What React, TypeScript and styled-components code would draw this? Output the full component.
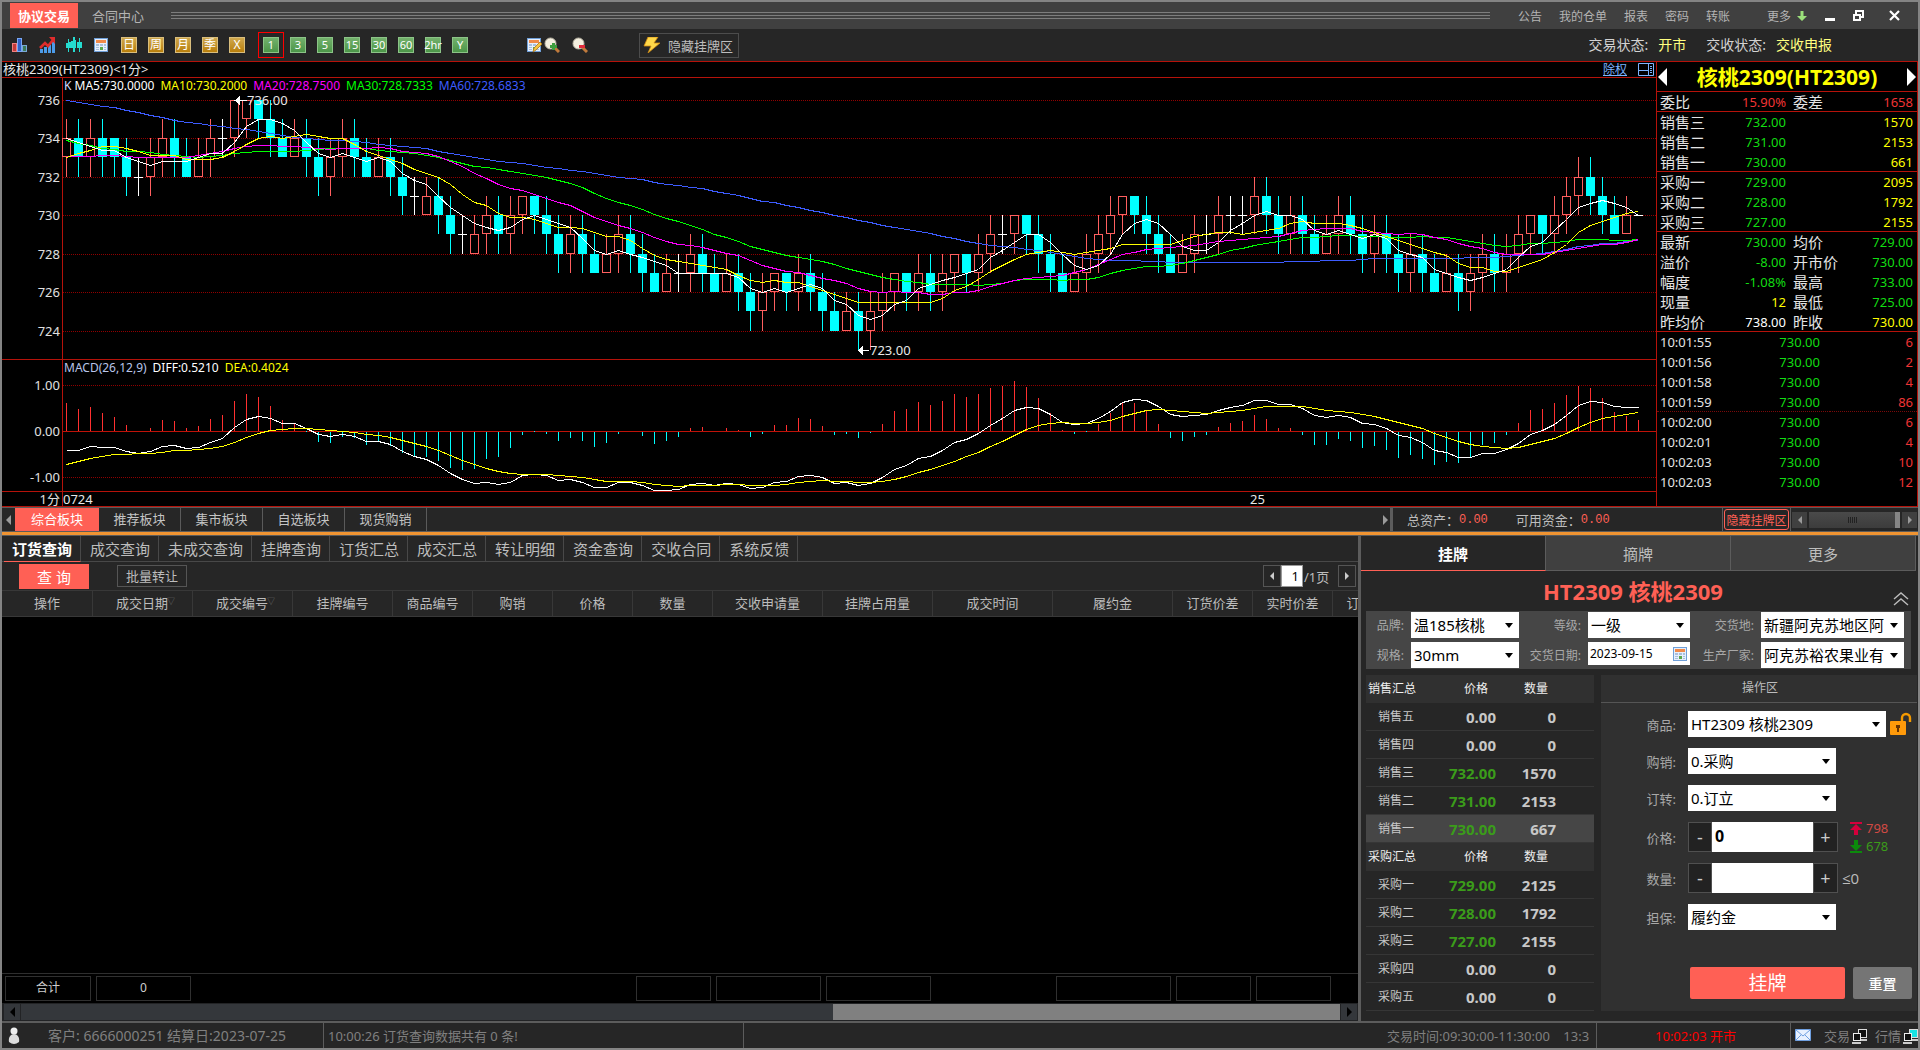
import React from 'react';
import styled, { createGlobalStyle, css } from 'styled-components';

const FONT = '"Noto Sans", "Noto Sans CJK SC", sans-serif';
const RED = '#b5120a';
const CORAL = '#ff6055';
const PANEL = '#262626';

const Global = createGlobalStyle`
  *, *::before, *::after { box-sizing: border-box; }
  body { margin: 0; background: #000; font-family: ${FONT}; font-size: 13px; color: #bdbdbd; }
  button, input, select { font-family: inherit; margin: 0; padding: 0; border: 0; border-radius: 0; outline: 0; }
  button { cursor: pointer; background: none; color: inherit; white-space: nowrap; }
  svg { display: block; flex: none; }
`;

/* ---------- market data ---------- */

type Kind = 'u' | 'd' | 'n';
interface Candle { kind: Kind; high: number; top: number; bottom: number; low: number }

// kind, high, body top, body bottom, low — prices are offsets from 720
const RAW = `u 15 14 13 12|d 15 14 13 12|u 15 14 13 12|d 15 14 13 12|d 14 14 13 12|d 14 13 12 11|n 13 12 12 11|u 14 13 12 11|u 15 14 13 12|d 15 14 13 12
d 14 13 12 12|u 14 13 12 12|u 15 14 13 12|n 15 14 14 13|u 16 16 14 13|u 16 16 15 14|d 16 16 15 14|d 16 15 14 13|d 15 14 13 13|u 15 14 13 13
d 15 14 13 12|d 14 13 12 11|u 14 13 12 11|u 15 14 13 12|d 15 14 13 12|d 14 13 12 12|u 14 13 12 12|d 14 13 12 11|d 13 12 11 10|n 12 11 11 10
u 12 11 10 10|d 12 11 10 9|d 11 10 9 8|n 10 9 9 8|u 10 9 8 8|u 11 10 9 8|d 11 10 9 8|u 11 10 9 8|u 11 11 10 9|d 11 11 10 9
d 11 10 9 8|d 10 9 8 7|u 10 9 8 7|d 10 9 8 7|d 9 8 7 7|u 9 8 7 7|u 10 9 8 7|d 10 9 8 7|d 9 8 7 6|d 8 7 6 6
u 8 7 6 6|n 8 7 7 6|u 9 8 7 6|d 9 8 7 6|d 8 7 6 6|u 8 7 6 6|d 8 7 6 5|d 7 6 5 4|u 7 6 5 4|u 7 7 6 5
d 7 7 6 5|u 8 7 6 5|d 8 7 6 5|d 7 6 5 4|d 6 5 4 4|u 6 5 4 4|d 6 5 4 3|u 6 5 4 3|u 7 6 5 4|u 7 7 6 5
d 7 7 6 5|u 8 7 6 5|d 8 7 6 5|u 8 7 6 5|u 8 8 7 6|d 8 8 7 6|u 9 8 7 6|u 10 9 8 7|n 10 9 9 8|u 10 10 9 8
d 10 10 9 8|d 10 9 8 7|d 9 8 7 6|d 8 7 6 6|u 8 7 6 6|u 9 8 7 6|u 10 9 8 7|u 11 10 9 8|u 11 11 10 9|d 11 11 10 9
d 11 10 9 8|d 10 9 8 7|d 9 8 7 7|u 9 8 7 7|u 10 9 8 7|n 10 9 9 8|u 11 10 9 8|n 11 10 10 9|n 11 10 10 9|u 12 11 10 9
d 12 11 10 9|d 11 10 9 8|u 11 10 9 8|d 11 10 9 8|d 10 9 8 8|u 10 9 8 8|u 11 10 9 8|d 11 10 9 8|d 10 9 8 7|u 10 9 8 7
d 10 9 8 7|d 9 8 7 6|u 9 8 7 6|d 9 8 7 6|d 8 7 6 6|u 8 7 6 6|d 8 7 6 5|u 8 7 6 5|u 9 8 7 6|d 9 8 7 6
u 9 8 7 6|u 10 9 8 7|u 10 10 9 8|d 10 10 9 8|u 11 10 9 8|u 12 11 10 9|u 13 12 11 10|d 13 12 11 10|d 12 11 10 9|d 11 10 9 9
u 11 10 9 9|n 10 10 10 10`;

const CANDLES: Candle[] = RAW.split(/[|\n]/).map((row) => {
  const [kind, ...v] = row.trim().split(' ');
  const [high, top, bottom, low] = v.map((n) => 720 + Number(n));
  return { kind: kind as Kind, high, top, bottom, low };
});
const CLOSES = CANDLES.map((c) => (c.kind === 'd' ? c.bottom : c.top));

// Averages whose window reaches back before the first bar are given as [index, value] knots.
function movingAverage(period: number, knots: [number, number][]): number[] {
  return CLOSES.map((_, i) => {
    if (i >= period - 1) {
      return CLOSES.slice(i - period + 1, i + 1).reduce((a, b) => a + b, 0) / period;
    }
    const k = knots.findIndex(([at]) => at >= i);
    if (k < 0) return knots[knots.length - 1][1];
    if (k === 0) return knots[0][1];
    const [x0, y0] = knots[k - 1];
    const [x1, y1] = knots[k];
    return y0 + ((y1 - y0) * (i - x0)) / (x1 - x0);
  });
}

const AVERAGES = [
  { color: '#3d5cff', values: movingAverage(60, [[0, 736], [1, 735.85], [3, 735.65], [4, 735.6], [5, 735.45], [7, 735.2], [9, 734.95], [10, 734.85], [12, 734.7], [13, 734.6], [15, 734.45], [17, 734.25], [18, 734.15], [20, 734], [22, 733.9], [24, 733.85], [26, 733.7], [30, 733.5], [32, 733.2], [34, 733], [36, 732.8], [38, 732.7], [40, 732.5], [42, 732.35], [44, 732.2], [46, 732], [48, 731.85], [49, 731.7], [51, 731.55], [53, 731.4], [54, 731.25], [56, 731.05], [58, 730.75]]) },
  { color: '#00ff00', values: movingAverage(30, [[0, 733.9], [1, 733.75], [2, 733.65], [3, 733.5], [4, 733.45], [5, 733.35], [7, 733.25], [9, 733.1], [11, 733], [12, 733.05], [14, 733.2], [16, 733.35], [19, 733.35], [23, 733.5], [25, 733.5], [27, 733.3], [28, 733.25]]) },
  { color: '#ff00ff', values: movingAverage(20, [[0, 733.05], [3, 733.1], [4, 733.1], [6, 733], [10, 733], [12, 733.2], [13, 733.3], [14, 733.5], [16, 733.65], [18, 733.6]]) },
  { color: '#ffff00', values: movingAverage(10, [[0, 733], [1, 733.2], [2, 733.4], [3, 733.6], [4, 733.6], [5, 733.5], [6, 733.3], [7, 733.1], [8, 733.1]]) },
  { color: '#ffffff', values: movingAverage(5, [[0, 734], [3, 733.4]]) },
];

const MACD = (() => {
  let fast = 733.39;
  let slow = 733.81;
  let dea = -0.72;
  return CLOSES.map((close, i) => {
    if (i > 0) {
      fast += (2 / 13) * (close - fast);
      slow += (2 / 27) * (close - slow);
      dea += 0.2 * (fast - slow - dea);
    }
    const diff = fast - slow;
    return { diff, dea, bar: 2 * (diff - dea) };
  });
})();

const barX = (i: number) => 3 + i * 12;
const priceY = (p: number) => Math.floor(6 + (736 - p) * 19.25);
const macdY = (v: number) => Math.round(55 - v * 46);
const path = (values: number[], y: (v: number) => number) =>
  values.map((v, i) => `${barX(i) + 0.5},${y(v) + 0.5}`).join(' ');

/* ---------- window frame ---------- */

const Window = styled.div`
  display: flex; flex-direction: column; min-height: 100vh; min-width: 1400px;
  border: 2px solid #848484; background: ${PANEL};
`;
const TitleBar = styled.header`
  display: flex; align-items: center; height: 27px; padding: 0 16px 0 8px; background: #404040; font-size: 12px;
`;
const AppTab = styled.button<{ $on?: boolean }>`
  height: 25px; padding: 0 8px; font-size: 13px; color: #b4b4b4; margin-right: 6px;
  ${(p) => p.$on && css`background: ${CORAL}; color: #fff; font-weight: 700;`}
`;
const Grip = styled.div`
  flex: 1; height: 7px; margin: 0 28px 0 13px;
  background: repeating-linear-gradient(#7d7d7d 0 1px, transparent 1px 3px);
`;
const TitleMenu = styled.nav`display: flex; gap: 17px; margin-right: 37px; color: #b4b4b4;`;
const MenuLink = styled.a`color: #b4b4b4; text-decoration: none;`;
const MoreLink = styled(MenuLink)`display: flex; gap: 6px; align-items: center; margin-right: 17px;`;
const WinButtons = styled.div`display: flex; gap: 14px; button { height: 20px; width: 14px; } button:last-child { margin-left: 8px; }`;

const Toolbar = styled.div`display: flex; align-items: center; height: 32px; padding: 0 86px 0 10px;`;
const ToolGroup = styled.div<{ $gap?: number; $after?: number }>`
  display: flex; align-items: center; gap: ${(p) => p.$gap ?? 11}px; margin-right: ${(p) => p.$after ?? 12}px;
`;
const IconButton = styled.button`width: 16px; height: 16px;`;
const PeriodButton = styled.button<{ $tone: 'gold' | 'green'; $on?: boolean }>`
  width: 16px; height: 16px; color: #fff; font-size: ${(p) => (p.$tone === 'gold' ? 12 : 11)}px; line-height: 14px;
  display: flex; align-items: center; justify-content: center;
  background: ${(p) => (p.$tone === 'gold' ? 'linear-gradient(#cfa84e, #b97f0c)' : 'linear-gradient(#73b16c, #4c9649)')};
  border: 1px solid ${(p) => (p.$tone === 'gold' ? '#d9be7d' : '#8cc487')};
  ${(p) => p.$on && css`outline: 1px solid #f00; outline-offset: 4px;`}
`;
const HideButton = styled.button`
  display: flex; align-items: center; gap: 7px; height: 25px; padding: 0 5px 0 3px; border: 1px solid #4c4c4c; font-size: 13px;
`;
const MarketState = styled.dl`
  display: flex; margin: 0 0 0 auto; font-size: 14px; line-height: 20px;
  dt { color: #d2d2d2; } dd { margin: 0 20px 0 10px; color: #ffff80; } dd:last-child { margin-right: 0; }
`;

/* ---------- chart ---------- */

const Market = styled.section`
  display: grid; grid-template-columns: minmax(0, 1fr) 262px; background: #000;
  border-top: 1px solid ${RED}; border-bottom: 1px solid ${RED};
`;
const Chart = styled.div`display: flex; flex-direction: column; min-width: 0; overflow-x: clip;`;
const ChartHead = styled.div`
  display: flex; align-items: center; height: 16px; border-bottom: 1px solid ${RED}; color: #e8e8e8; font-size: 13px; line-height: 15px;
  span { flex: 1; padding-left: 1px; } svg { margin: 0 2px 0 11px; }
`;
const ExLink = styled.a`color: #7db4ff; font-size: 12px; text-decoration: underline;`;
const Pane = styled.div`display: grid; grid-template-columns: 60px minmax(0, 1fr); border-bottom: 1px solid ${RED};
  &:last-child { border-bottom: 0; }
`;
const Axis = styled.svg`width: 60px; font-size: 13px; fill: #e0e0e0; overflow: visible;`;
const Plot = styled.div`border-left: 1px solid ${RED}; min-width: 0;`;
const Legend = styled.div`
  display: flex; gap: 6px; height: 16px; line-height: 16px; padding-left: 1px; font-size: 12px; white-space: nowrap;
`;
const Tint = styled.span<{ $c: string }>`color: ${(p) => p.$c};`;
const Canvas = styled.svg`width: 100%; font-size: 13px; overflow: visible;`;

/* ---------- quote side panel ---------- */

const Quote = styled.aside`border-left: 1px solid ${RED}; border-right: 1px solid ${RED}; background: #000;`;
const QuoteTitle = styled.div`
  display: flex; align-items: center; justify-content: space-between; height: 30px; padding: 0 1px; border-bottom: 1px solid ${RED};
  h1 { margin: 0; font-size: 21px; line-height: 28px; color: #ff0; font-weight: 700; }
`;
const QuoteTable = styled.table`
  width: 100%; border-collapse: separate; border-spacing: 0; table-layout: fixed; font-size: 13px; line-height: 18px;
  th { font-weight: 400; font-size: 15px; color: #e4e4e4; text-align: left; padding: 0 0 0 3px; white-space: nowrap; }
  td { text-align: right; padding: 0 4px 0 0; }
  th, td { height: 20px; }
`;
const QuoteRow = styled.tr<{ $rule?: 'solid' | 'dotted' }>`
  ${(p) => p.$rule && css`th, td { border-bottom: 1px ${p.$rule} ${p.$rule === 'solid' ? RED : '#7a0a0a'}; }`}
`;
const Num = styled.td<{ $c: string }>`color: ${(p) => p.$c};`;
const TickTime = styled.th`&& { font-size: 13px; }`;
const TickPrice = styled(Num)`&& { padding-right: 10px; }`;

/* ---------- board bar ---------- */

const BoardBar = styled.div`
  display: flex; align-items: stretch; height: 25px; border-top: 1px solid #5c5c5c; border-bottom: 1px solid #5c5c5c;
`;
const ScrollTip = styled.button<{ $end?: boolean }>`
  width: 13px; display: flex; align-items: center; justify-content: center;
  ${(p) => p.$end && css`margin-left: auto; width: 9px;`}
`;
const BoardTab = styled.button<{ $on?: boolean }>`
  width: 82px; font-size: 13px; line-height: 21px; border-right: 1px solid #5a5a5a; color: #c4c4c4;
  ${(p) => p.$on && css`width: 84px; background: ${CORAL}; color: #fff; border-right: 0;`}
`;
const Funds = styled.dl`
  display: flex; align-items: center; margin: 0; width: 333px; border-left: 3px solid #5c5c5c; border-right: 1px solid #5c5c5c; padding-left: 14px;
  dt { color: #bdbdbd; } dd { margin: 0 28px 0 0; color: ${CORAL}; font-family: "Liberation Mono", monospace; font-size: 12px; }
`;
const OutlineButton = styled.button`
  align-self: center; margin: 0 1px; width: 65px; height: 21px; border: 1px solid ${CORAL}; border-radius: 3px; color: ${CORAL}; font-size: 12px;
`;
const MiniScroll = styled.div`
  display: flex; align-items: center; gap: 2px; padding: 0 1px; border-left: 1px solid #5c5c5c;
  button { width: 15px; height: 16px; background: #404040; display: flex; align-items: center; justify-content: center; }
`;
const MiniTrack = styled.div`
  width: 91px; height: 16px; background: linear-gradient(#4a4a4a, #3c3c3c); border-right: 5px solid #858585;
  display: flex; align-items: center; justify-content: center;
`;
const Divider = styled.div`height: 4px; background: #f09432; border-bottom: 1px solid #5c5c5c;`;

/* ---------- orders ---------- */

const Lower = styled.main`display: flex; flex: 1; min-height: 485px;`;
const Orders = styled.section`flex: 1; min-width: 0; display: flex; flex-direction: column; overflow: hidden;`;
const OrderTabs = styled.div`display: flex; height: 26px; border-bottom: 1px solid #484848; padding-left: 2px;`;
const OrderTab = styled.button<{ $on?: boolean }>`
  padding: 0 8px 0 9px; font-size: 15px; line-height: 24px; color: #bdbdbd; border-right: 1px solid #484848;
  ${(p) => p.$on && css`color: #fff; font-weight: 700; padding: 0 8px; border-bottom: 1px solid ${CORAL}; height: 26px;`}
`;
const Actions = styled.div`display: flex; align-items: center; height: 28px; padding: 0 2px 0 17px;`;
const QueryButton = styled.button`width: 70px; height: 25px; background: ${CORAL}; color: #fff; font-size: 15px; margin-right: 28px;`;
const BatchButton = styled.button`width: 70px; height: 22px; border: 1px solid #555; font-size: 13px; line-height: 18px;`;
const Pager = styled.div`display: flex; align-items: center; margin-left: auto; height: 22px;`;
const PageButton = styled.button`
  width: 18px; height: 22px; border: 1px solid #555; display: flex; align-items: center; justify-content: center;
`;
const PageInput = styled.input`
  width: 22px; height: 22px; border: 1px solid #999; background: #fff; color: #000; font-size: 13px; text-align: right; padding-right: 3px;
`;
const PageCount = styled.label`padding: 0 9px 0 1px; width: 35px; white-space: nowrap;`;

const COLS = '91px 100px 100px 100px 80px 80px 80px 80px 110px 110px 120px 120px 80px 80px 80px';
const OrderTable = styled.table`
  flex: 1; display: flex; flex-direction: column; background: #000; overflow: hidden;
  thead, tfoot { display: block; }
  tbody { display: block; flex: 1; }
  tr { display: grid; grid-template-columns: ${COLS}; }
  thead tr { background: ${PANEL}; border-top: 1px solid #383838; border-bottom: 1px solid #383838; height: 27px; }
  th { font-weight: 400; padding: 0; line-height: 25px; text-align: center; border-right: 1px solid #383838; }
  tfoot tr { border-top: 1px solid #2e2e2e; height: 30px; padding: 2px 0; }
`;
const SortMark = styled.span`display: inline-block; margin: 0 -6px 0 -1px; font-size: 8px; color: #6a6a6a; vertical-align: top; line-height: 20px;`;
const TotalCell = styled.td<{ $box: boolean }>`
  margin: 0 2px 0 3px; padding: 0; text-align: center; line-height: 22px; font-size: 12px; color: #cfcfcf;
  border: 1px solid ${(p) => (p.$box ? '#303030' : 'transparent')};
`;
const HScroll = styled.div`
  display: flex; align-items: center; gap: 1px; height: 18px; padding: 0 1px 0 2px; background: #222325;
  button { width: 16px; height: 16px; background: #34373b; display: flex; align-items: center; justify-content: center; }
`;
const HTrack = styled.div`flex: 1; height: 16px; background: #34373b; display: flex; justify-content: flex-end;`;
const HThumb = styled.div`flex: 0 0 calc(100% * 5 / 13); background: #808080;`;

/* ---------- trade panel ---------- */

const Trade = styled.section`
  flex: 0 0 560px; border-left: 3px solid #5c5c5c; display: flex; flex-direction: column; background: ${PANEL};
`;
const TradeTabs = styled.div`display: grid; grid-template-columns: repeat(3, 1fr); height: 35px; margin-right: 2px;`;
const TradeTab = styled.button<{ $on?: boolean }>`
  font-size: 15px; background: ${(p) => (p.$on ? PANEL : '#404040')}; color: ${(p) => (p.$on ? '#fff' : '#bdbdbd')};
  font-weight: ${(p) => (p.$on ? 700 : 400)};
  border-bottom: 1px solid ${(p) => (p.$on ? CORAL : '#5c5c5c')}; border-right: 1px solid #5c5c5c;
`;
const TradeTitle = styled.div`
  display: grid; grid-template-columns: 1fr 20px; align-items: end; height: 40px; padding: 0 5px 5px 12px;
  h2 { margin: 0; color: ${CORAL}; font-size: 22px; line-height: 30px; text-align: center; }
`;
const Filters = styled.div`
  display: grid; grid-template-columns: 38px 108px 55px 102px 57px 143px; column-gap: 7px; row-gap: 4px; align-items: center;
  margin: 0 7px 6px 5px; padding: 1px 6px 1px 0; background: #464646;
`;
const FieldLabel = styled.label<{ $size?: number }>`
  font-size: ${(p) => p.$size ?? 12}px; color: #a8a8a8; text-align: right; white-space: nowrap;
`;
const SelectWrap = styled.div<{ $w?: string }>`
  display: grid; grid-template: 26px / minmax(0, 1fr); width: ${(p) => p.$w ?? 'auto'};
  > * { grid-area: 1 / 1; }
  > svg { justify-self: end; align-self: center; margin-right: 6px; pointer-events: none; }
`;
const Select = styled.select`
  appearance: none; background: #fff; color: #000; font-size: 15px; width: 100%; height: 26px; padding: 0 20px 0 3px; text-overflow: clip;
`;
const DateBox = styled.div`
  display: flex; align-items: center; height: 23px; background: #fff; padding: 0 2px 0 2px; align-self: start;
`;
const DateInput = styled.input`flex: 1; min-width: 0; background: #fff; color: #000; font-size: 12px; height: 23px;`;

const TradeBody = styled.div`display: flex; gap: 7px; flex: 1; padding: 0 1px 10px 5px;`;
const Book = styled.table`
  flex: none; align-self: flex-start; width: 228px; border-collapse: separate; border-spacing: 0; table-layout: fixed; color: #c8c8c8; font-size: 12px;
  th, td { height: 28px; padding: 0; font-weight: 400; text-align: right; line-height: 20px; }
`;
const BookHead = styled.tr`
  background: #303030; color: #f0f0f0;
  th:first-child { text-align: left; padding-left: 2px; }
  th:nth-child(2) { padding-right: 8px; } th:nth-child(3) { padding-right: 8px; }
`;
const BookRow = styled.tr<{ $on?: boolean }>`
  background: ${(p) => (p.$on ? '#464646' : 'transparent')};
  th, td { border-bottom: 1px solid #363636; }
  th { text-align: left; padding-left: 12px; }
`;
const BookNum = styled.td<{ $green?: boolean }>`&& { font-size: 15px; font-weight: 700; } color: ${(p) => (p.$green ? '#3b9c1a' : '#c8c8c8')};`;

const Entry = styled.form`flex: 1; background: #303030; display: flex; flex-direction: column;`;
const EntryHead = styled.div`height: 28px; line-height: 26px; border-bottom: 1px solid #555; text-align: center; font-size: 12px; padding-left: 2px;`;
const EntryRows = styled.div`display: flex; flex-direction: column; gap: 11px; padding: 8px 0 0;`;
const EntryRow = styled.div`display: grid; grid-template-columns: 75px auto; column-gap: 12px; align-items: center; justify-content: start;`;
const Inline = styled.div`display: flex; align-items: center; gap: 4px;`;
const Stepper = styled.div`
  display: grid; grid-template-columns: 24px 101px 25px; height: 30px;
  button { background: #222; border: 1px solid #505050; color: #ccc; font-size: 18px; line-height: 26px; }
  input { background: #fff; color: #000; font-size: 16px; font-weight: 700; padding: 0 0 3px 3px; width: 100%; }
`;
const Limits = styled.div`
  display: flex; flex-direction: column; justify-content: center; height: 30px; padding-left: 8px; line-height: 18px; font-size: 13px;
`;
const Limit = styled.span<{ $c: string }>`display: flex; align-items: center; gap: 4px; color: ${(p) => p.$c};`;
const MaxQty = styled.span`font-size: 15px; line-height: 20px; font-family: "Open Sans", "DejaVu Sans", sans-serif;`;
const EntryButtons = styled.div`display: flex; gap: 8px; padding: 37px 5px 12px 89px;`;
const SubmitButton = styled.button`flex: 1; height: 32px; border-radius: 2px; background: ${CORAL}; color: #fff; font-size: 19px; line-height: 30px;`;
const ResetButton = styled.button`width: 59px; height: 32px; border-radius: 2px; background: #757575; color: #fff; font-size: 14px; font-weight: 500;`;

/* ---------- status bar ---------- */

const StatusBar = styled.footer`
  display: flex; height: 27px; border-top: 2px solid #5c5c5c; color: #808080; font-size: 13px; line-height: 24px;
`;
const StatusCell = styled.div<{ $w?: number; $c?: string; $center?: boolean }>`
  flex: ${(p) => (p.$w ? `0 0 ${p.$w}px` : '1')}; display: flex; align-items: center; border-right: 1px solid #5c5c5c;
  white-space: pre; overflow: hidden; color: ${(p) => p.$c ?? 'inherit'}; padding-left: 4px;
  justify-content: ${(p) => (p.$center ? 'center' : 'flex-start')};
  &:last-child { border-right: 0; }
`;
const Client = styled.span`font-size: 14px; padding-left: 26px;`;
const Hours = styled.span`margin-left: auto; width: 209px;`;
const LinkState = styled.span`display: flex; align-items: center; gap: 2px; margin-left: 7px; &:nth-of-type(1) { margin-left: 13px; }`;

/* ---------- icons ---------- */

const Tri = ({ dir, c = '#9a9a9a', w = 5, h = 10 }: { dir: 'l' | 'r'; c?: string; w?: number; h?: number }) => (
  <svg width={w} height={h}><path fill={c} d={dir === 'l' ? `M${w} 0V${h}L0 ${h / 2}z` : `M0 0V${h}L${w} ${h / 2}z`} /></svg>
);
const Caret = () => <svg width="8" height="5"><path d="M0 0h8L4 5z" fill="#000" /></svg>;

const CalendarIcon = ({ pen }: { pen?: boolean }) => (
  <svg width="16" height="16">
    <rect x="1.5" y="1.5" width="13" height="13" fill="#e6effc" stroke="#6f9fd8" />
    <rect x="3" y="3" width="10" height="3" fill="#f08a4a" />
    <path d="M3 7h3v2H3zM7 7h3v2H7zM11 7h2v2h-2zM3 10h3v1H3zM11 10h2v1h-2zM3 12h3v1H3zM11 12h2v1h-2z" fill="#a9bfdd" />
    <rect x="7" y="10" width="3" height="3" fill="#5aa84c" />
    {pen && <path d="M7 15l1-4 6-6 2 2-6 6z" fill="#f5c542" stroke="#a8741a" strokeWidth="0.8" />}
  </svg>
);
const BarsIcon = () => (
  <svg width="16" height="16">
    <rect x="0.5" y="6.5" width="4" height="8" fill="#c23a3a" stroke="#f08080" />
    <rect x="5.5" y="1.5" width="4" height="13" fill="#2f62c8" stroke="#7aa8f4" />
    <rect x="10.5" y="8.5" width="4" height="6" fill="#3d7b5c" stroke="#7aa8d8" />
  </svg>
);
const TrendIcon = () => (
  <svg width="16" height="16">
    <path d="M1 16v-4h3v4zM5 16v-6h3v6zM9 16V8h3v8zM13 16V5h3v11z" fill="#4c9be8" />
    <path d="M1 11l5-5 3 3 5-6" fill="none" stroke="#e02c2c" strokeWidth="2.600" /><path d="M10 0h6v7z" fill="#e02c2c" />
  </svg>
);
const CandleIcon = () => (
  <svg width="16" height="16" fill="#25dcd0">
    <path d="M2 2h1v3h2v6H3v4H2v-4H0V6h2zM7 0h2v3h1v8H9v4H7v-4H5V4h2zM13 1h1v4h2v6h-2v4h-1v-4h-2V5h2z" />
  </svg>
);
const LensIcon = ({ plus }: { plus?: boolean }) => (
  <svg width="16" height="16">
    <path d="M10 10l5 5" stroke="#c07a3c" strokeWidth="3" /><circle cx="6.5" cy="6.5" r="5.5" fill="#f4efdf" stroke="#b9b4a4" />
    {plus ? <path d="M6 8h7v3H6zM8 6h3v7H8z" fill="#3e9e3e" /> : <path d="M7 8h6v3H7z" fill="#e02c3c" />}
  </svg>
);
const BoltIcon = () => (
  <svg width="18" height="16"><path d="M5 0h10l-4 6h6L5 16l3-7H1z" fill="#ffd84a" stroke="#d08a12" strokeWidth="0.8" /></svg>
);
const LockIcon = () => (
  <svg width="22" height="24">
    <path d="M12 10V6a4 4 0 018 0v4" fill="none" stroke="#f59a00" strokeWidth="2.400" />
    <rect x="0" y="9" width="16" height="14" rx="1" fill="#ff9a0a" /><path d="M6 13h4v3H9v4H7v-4H6z" fill="#6a3400" />
  </svg>
);
const LimitIcon = ({ up }: { up?: boolean }) => (
  <svg width="12" height="13">
    {up ? <path fill="#d4003c" d="M0 0h12v2H0zM6 2l6 6H8v5H4V8H0z" /> : <path fill="#0b8a0b" d="M0 11h12v2H0zM6 11L0 5h4V0h4v5h4z" />}
  </svg>
);
const NetIcon = ({ on }: { on?: boolean }) => (
  <svg width="16" height="16">
    <rect x="6.500" y="1.500" width="8" height="8" fill={on ? '#17e4e4' : '#111'} stroke="#ddd" />
    <path d="M8 11h7v2H8z" fill="#ccc" />
    <rect x="1.500" y="5.500" width="7" height="7" fill="#111" stroke="#eee" /><path d="M0 14h9v2H0z" fill="#ccc" />
  </svg>
);

/* ---------- sections ---------- */

const GREEN = '#12dc12';
const QRED = '#f03434';

const PriceChart = () => (
  <Pane>
    <Axis height={281} textAnchor="end">
      {[736, 734, 732, 730, 728, 726, 724].map((p) => <text key={p} x="58" y={priceY(p) + 21}>{p}</text>)}
    </Axis>
    <Plot>
      <Legend>
        <span><Tint $c="#d0d8ff">K</Tint> <Tint $c="#fff">MA5:730.0000</Tint></span>
        <Tint $c="#ff0">MA10:730.2000</Tint><Tint $c="#f0f">MA20:728.7500</Tint>
        <Tint $c="#0f0">MA30:728.7333</Tint><Tint $c="#3d5cff">MA60:728.6833</Tint>
      </Legend>
      <Canvas height={265}>
        <g shapeRendering="crispEdges">
          {[736, 734, 732, 730, 728, 726, 724].map((p) => (
            <line key={p} x1="0" x2="100%" y1={priceY(p) + 0.5} y2={priceY(p) + 0.5} stroke="#900000" strokeDasharray="1 1" />
          ))}
          {CANDLES.map((c, i) => {
            const x = barX(i);
            const [h, t, b, l] = [c.high, c.top, c.bottom, c.low].map(priceY);
            if (c.kind === 'n') return <path key={i} d={`M${x - 4} ${t + 0.5}h9M${x + 0.5} ${h}V${l}`} stroke="#fff" fill="none" />;
            if (c.kind === 'd') return <path key={i} d={`M${x - 4} ${t}h9V${b}h-9zM${x} ${h}h1V${l}h-1z`} fill="#0ff" />;
            return (
              <path key={i} d={`M${x - 3.5} ${t + 0.5}h8V${b - 0.5}h-8zM${x + 0.5} ${h}V${t}M${x + 0.5} ${b}V${l}`} stroke="#ff5f5f" fill="none" />
            );
          })}
          {AVERAGES.map((a) => <polyline key={a.color} points={path(a.values, priceY)} stroke={a.color} fill="none" />)}
          <path d={`M${barX(14)} 6.500h13M${barX(14) + 2} 6.500l3 -3v6z`} stroke="#fff" fill="#fff" />
          <path d={`M${barX(66)} 256.500h11M${barX(66) + 1} 256.500l3 -3v6z`} stroke="#fff" fill="#fff" />
        </g>
        <text x={barX(14) + 13} y="11" fill="#e8e8e8">736.00</text>
        <text x={barX(66) + 12} y="261" fill="#e8e8e8">723.00</text>
      </Canvas>
    </Plot>
  </Pane>
);

const MacdChart = () => (
  <Pane>
    <Axis height={131} textAnchor="end">
      <text x="58" y="30">1.00</text><text x="58" y="76">0.00</text><text x="58" y="122">-1.00</text>
    </Axis>
    <Plot>
      <Legend><Tint $c="#b8c4e8">MACD(26,12,9)</Tint><Tint $c="#fff">DIFF:0.5210</Tint><Tint $c="#ff0">DEA:0.4024</Tint></Legend>
      <Canvas height={115} shapeRendering="crispEdges">
        {[1, -1].map((v) => (
          <line key={v} x1="0" x2="100%" y1={macdY(v) + 0.5} y2={macdY(v) + 0.5} stroke="#900000" strokeDasharray="1 1" />
        ))}
        <line x1="0" x2="100%" y1="55.500" y2="55.500" stroke="#c01208" />
        {MACD.map((m, i) => (
          <line key={i} x1={barX(i) + 0.5} x2={barX(i) + 0.5} y1={m.bar > 0 ? 55 : 56} y2={macdY(m.bar)} stroke={m.bar > 0 ? '#ff3030' : '#0ff'} />
        ))}
        <polyline points={path(MACD.map((m) => m.diff), macdY)} stroke="#fff" fill="none" />
        <polyline points={path(MACD.map((m) => m.dea), macdY)} stroke="#ff0" fill="none" />
      </Canvas>
    </Plot>
  </Pane>
);

const TimeAxis = () => (
  <Pane>
    <Axis height={14} textAnchor="end"><text x="58" y="12">1分</text></Axis>
    <Plot><Canvas height={14} fill="#e8e8e8"><text x="0" y="12">0724</text><text x={barX(99) - 4} y="12">25</text></Canvas></Plot>
  </Pane>
);

const DEPTH: [string, string, string, boolean][] = [
  ['销售三', '732.00', '1570', false], ['销售二', '731.00', '2153', false], ['销售一', '730.00', '661', true],
  ['采购一', '729.00', '2095', false], ['采购二', '728.00', '1792', false], ['采购三', '727.00', '2155', true],
];
const STATS: [string, string, string, string, string, string][] = [
  ['最新', '730.00', GREEN, '均价', '729.00', GREEN],
  ['溢价', '-8.00', GREEN, '开市价', '730.00', GREEN],
  ['幅度', '-1.08%', GREEN, '最高', '733.00', GREEN],
  ['现量', '12', '#ff0', '最低', '725.00', GREEN],
  ['昨均价', '738.00', '#fff', '昨收', '730.00', '#ff0'],
];
const TICKS: [string, string][] = [
  ['10:01:55', '6'], ['10:01:56', '2'], ['10:01:58', '4'], ['10:01:59', '86'],
  ['10:02:00', '6'], ['10:02:01', '4'], ['10:02:03', '10'], ['10:02:03', '12'],
];

const QuotePanel = () => (
  <Quote>
    <QuoteTitle>
      <Tri dir="l" c="#fff" w={9} h={18} /><h1>核桃2309(HT2309)</h1><Tri dir="r" c="#fff" w={9} h={18} />
    </QuoteTitle>
    <QuoteTable>
      <colgroup><col style={{ width: 62 }} /><col style={{ width: 71 }} /><col style={{ width: 62 }} /><col /></colgroup>
      <tbody>
        <QuoteRow $rule="solid"><th>委比</th><Num $c={QRED}>15.90%</Num><th>委差</th><Num $c={QRED}>1658</Num></QuoteRow>
        {DEPTH.map(([n, p, q, end]) => (
          <QuoteRow key={n} $rule={end ? 'solid' : undefined}><th>{n}</th><Num $c={GREEN}>{p}</Num><td /><Num $c="#ff0">{q}</Num></QuoteRow>
        ))}
        {STATS.map(([a, av, ac, b, bv, bc], i) => (
          <QuoteRow key={a} $rule={i === 4 ? 'solid' : undefined}><th>{a}</th><Num $c={ac}>{av}</Num><th>{b}</th><Num $c={bc}>{bv}</Num></QuoteRow>
        ))}
      </tbody>
    </QuoteTable>
    <QuoteTable>
      <colgroup><col style={{ width: 90 }} /><col style={{ width: 83 }} /><col /></colgroup>
      <tbody>
        {TICKS.map(([t, q], i) => (
          <QuoteRow key={i} $rule={i === 3 ? 'dotted' : undefined}>
            <TickTime>{t}</TickTime><TickPrice $c={GREEN}>730.00</TickPrice><Num $c={QRED}>{q}</Num>
          </QuoteRow>
        ))}
      </tbody>
    </QuoteTable>
  </Quote>
);

const HEADS = ['操作', '成交日期', '成交编号', '挂牌编号', '商品编号', '购销', '价格', '数量', '交收申请量', '挂牌占用量', '成交时间', '履约金', '订货价差', '实时价差', '订货盈亏'];
const TOTALS: (string | null)[] = ['合计', '0', null, null, null, null, null, '', '', '', null, '', '', ''];

const OrdersPanel = () => (
  <Orders>
    <OrderTabs role="tablist">
      {['订货查询', '成交查询', '未成交查询', '挂牌查询', '订货汇总', '成交汇总', '转让明细', '资金查询', '交收合同', '系统反馈'].map((t, i) => (
        <OrderTab key={t} type="button" role="tab" aria-selected={i === 0} $on={i === 0}>{t}</OrderTab>
      ))}
    </OrderTabs>
    <Actions>
      <QueryButton type="button">查 询</QueryButton>
      <BatchButton type="button">批量转让</BatchButton>
      <Pager>
        <PageButton type="button" aria-label="上一页"><Tri dir="l" c="#ccc" w={4} h={8} /></PageButton>
        <PageInput id="page" defaultValue="1" />
        <PageCount htmlFor="page">/1页</PageCount>
        <PageButton type="button" aria-label="下一页"><Tri dir="r" c="#ccc" w={4} h={8} /></PageButton>
      </Pager>
    </Actions>
    <OrderTable>
      <thead><tr>{HEADS.map((h, i) => <th key={h} scope="col">{h}{(i === 1 || i === 2) && <SortMark>▽</SortMark>}</th>)}</tr></thead>
      <tbody />
      <tfoot><tr>{TOTALS.map((t, i) => <TotalCell key={i} $box={t !== null}>{t}</TotalCell>)}</tr></tfoot>
    </OrderTable>
    <HScroll>
      <button type="button" aria-label="向左"><Tri dir="l" c="#000" /></button>
      <HTrack><HThumb /></HTrack>
      <button type="button" aria-label="向右"><Tri dir="r" c="#000" /></button>
    </HScroll>
  </Orders>
);

const Choice = ({ id, value, w }: { id: string; value: string; w?: string }) => (
  <SelectWrap $w={w}><Select id={id} defaultValue={value}><option>{value}</option></Select><Caret /></SelectWrap>
);

const SELLS: [string, string, string][] = [['销售五', '0.00', '0'], ['销售四', '0.00', '0'], ['销售三', '732.00', '1570'], ['销售二', '731.00', '2153'], ['销售一', '730.00', '667']];
const BUYS: [string, string, string][] = [['采购一', '729.00', '2125'], ['采购二', '728.00', '1792'], ['采购三', '727.00', '2155'], ['采购四', '0.00', '0'], ['采购五', '0.00', '0']];

const BookSide = ({ title, rows }: { title: string; rows: [string, string, string][] }) => (
  <tbody>
    <BookHead><th scope="col">{title}</th><th scope="col">价格</th><th scope="col">数量</th><th /></BookHead>
    {rows.map(([n, p, q]) => (
      <BookRow key={n} $on={n === '销售一'}>
        <th scope="row">{n}</th><BookNum $green={p !== '0.00'}>{p}</BookNum><BookNum>{q}</BookNum><td />
      </BookRow>
    ))}
  </tbody>
);

const TradePanel = () => (
  <Trade>
    <TradeTabs role="tablist">
      <TradeTab type="button" role="tab" $on>挂牌</TradeTab><TradeTab type="button" role="tab">摘牌</TradeTab><TradeTab type="button" role="tab">更多</TradeTab>
    </TradeTabs>
    <TradeTitle>
      <h2>HT2309 核桃2309</h2>
      <svg width="16" height="14"><path d="M1 7l7-6 7 6M1 13l7-6 7 6" fill="none" stroke="#bbb" strokeWidth="1.400" /></svg>
    </TradeTitle>
    <Filters>
      <FieldLabel htmlFor="brand">品牌:</FieldLabel><Choice id="brand" value="温185核桃" />
      <FieldLabel htmlFor="grade">等级:</FieldLabel><Choice id="grade" value="一级" />
      <FieldLabel htmlFor="place">交货地:</FieldLabel><Choice id="place" value="新疆阿克苏地区阿" />
      <FieldLabel htmlFor="spec">规格:</FieldLabel><Choice id="spec" value="30mm" />
      <FieldLabel htmlFor="date">交货日期:</FieldLabel>
      <DateBox><DateInput id="date" defaultValue="2023-09-15" /><CalendarIcon /></DateBox>
      <FieldLabel htmlFor="maker">生产厂家:</FieldLabel><Choice id="maker" value="阿克苏裕农果业有" />
    </Filters>
    <TradeBody>
      <Book>
        <colgroup><col style={{ width: 60 }} /><col style={{ width: 70 }} /><col style={{ width: 60 }} /><col /></colgroup>
        <BookSide title="销售汇总" rows={SELLS} />
        <BookSide title="采购汇总" rows={BUYS} />
      </Book>
      <Entry>
        <EntryHead>操作区</EntryHead>
        <EntryRows>
          <EntryRow><FieldLabel $size={13} htmlFor="goods">商品:</FieldLabel><Inline><Choice id="goods" value="HT2309 核桃2309" w="198px" /><LockIcon /></Inline></EntryRow>
          <EntryRow><FieldLabel $size={13} htmlFor="side">购销:</FieldLabel><Choice id="side" value="0.采购" w="148px" /></EntryRow>
          <EntryRow><FieldLabel $size={13} htmlFor="open">订转:</FieldLabel><Choice id="open" value="0.订立" w="148px" /></EntryRow>
          <EntryRow>
            <FieldLabel $size={13} htmlFor="price">价格:</FieldLabel>
            <Inline>
              <Stepper><button type="button">-</button><input id="price" defaultValue="0" /><button type="button">+</button></Stepper>
              <Limits><Limit $c="#d04a44"><LimitIcon up />798</Limit><Limit $c="#3b9c1a"><LimitIcon />678</Limit></Limits>
            </Inline>
          </EntryRow>
          <EntryRow>
            <FieldLabel $size={13} htmlFor="qty">数量:</FieldLabel>
            <Inline>
              <Stepper><button type="button">-</button><input id="qty" /><button type="button">+</button></Stepper>
              <MaxQty>≤0</MaxQty>
            </Inline>
          </EntryRow>
          <EntryRow><FieldLabel $size={13} htmlFor="margin">担保:</FieldLabel><Choice id="margin" value="履约金" w="148px" /></EntryRow>
        </EntryRows>
        <EntryButtons><SubmitButton type="button">挂牌</SubmitButton><ResetButton type="button">重置</ResetButton></EntryButtons>
      </Entry>
    </TradeBody>
  </Trade>
);

export default function App() {
  return (
    <>
      <Global />
      <Window>
        <TitleBar>
          <AppTab type="button" $on>协议交易</AppTab><AppTab type="button">合同中心</AppTab>
          <Grip />
          <TitleMenu>
            {['公告', '我的仓单', '报表', '密码', '转账'].map((m) => <MenuLink key={m} href="#">{m}</MenuLink>)}
          </TitleMenu>
          <MoreLink href="#">更多<svg width="10" height="10"><path d="M3.500 0h3v5H10l-5 5-5-5h3.500z" fill="#9be07a" /></svg></MoreLink>
          <WinButtons>
            <button type="button" aria-label="最小化"><svg width="14" height="14"><path d="M1 9h10v3H1z" fill="#fff" /></svg></button>
            <button type="button" aria-label="还原"><svg width="14" height="14"><path d="M4 5V2h7v6H9M2 6h6v5H2z" fill="none" stroke="#fff" strokeWidth="2" /></svg></button>
            <button type="button" aria-label="关闭"><svg width="14" height="14"><path d="M2 2l9 9M11 2l-9 9" stroke="#fff" strokeWidth="2.200" /></svg></button>
          </WinButtons>
        </TitleBar>
        <Toolbar>
          <ToolGroup>
            <IconButton aria-label="统计"><BarsIcon /></IconButton><IconButton aria-label="走势"><TrendIcon /></IconButton>
            <IconButton aria-label="K线"><CandleIcon /></IconButton><IconButton aria-label="日历"><CalendarIcon /></IconButton>
          </ToolGroup>
          <ToolGroup $after={18}>
            {['日', '周', '月', '季', 'X'].map((t) => <PeriodButton key={t} type="button" $tone="gold">{t}</PeriodButton>)}
          </ToolGroup>
          <ToolGroup $after={58}>
            {['1', '3', '5', '15', '30', '60', '2hr', 'Y'].map((t) => <PeriodButton key={t} type="button" $tone="green" $on={t === '1'}>{t}</PeriodButton>)}
          </ToolGroup>
          <ToolGroup $gap={2}><IconButton aria-label="编辑"><CalendarIcon pen /></IconButton><IconButton aria-label="放大"><LensIcon plus /></IconButton></ToolGroup>
          <ToolGroup $after={51}><IconButton aria-label="缩小"><LensIcon /></IconButton></ToolGroup>
          <HideButton type="button"><BoltIcon />隐藏挂牌区</HideButton>
          <MarketState><dt>交易状态:</dt><dd>开市</dd><dt>交收状态:</dt><dd>交收申报</dd></MarketState>
        </Toolbar>
        <Market>
          <Chart>
            <ChartHead>
              <span>核桃2309(HT2309)&lt;1分&gt;</span><ExLink href="#">除权</ExLink>
              <svg width="16" height="13" fill="none" stroke="#7db4ff"><path d="M.5.5h15v12H.5zM10.500 0v13M0 7.500h10M12 3.500h2M12 5.500h2M12 7.500h2M12 9.500h2" /></svg>
            </ChartHead>
            <PriceChart />
            <MacdChart />
            <TimeAxis />
          </Chart>
          <QuotePanel />
        </Market>
        <BoardBar>
          <ScrollTip aria-label="向左"><Tri dir="l" /></ScrollTip>
          {['综合板块', '推荐板块', '集市板块', '自选板块', '现货购销'].map((t, i) => <BoardTab key={t} type="button" $on={i === 0}>{t}</BoardTab>)}
          <ScrollTip aria-label="向右" $end><Tri dir="r" /></ScrollTip>
          <Funds><dt>总资产：</dt><dd>0.00</dd><dt>可用资金：</dt><dd>0.00</dd></Funds>
          <OutlineButton type="button">隐藏挂牌区</OutlineButton>
          <MiniScroll>
            <button type="button" aria-label="向左"><Tri dir="l" w={4} h={8} /></button>
            <MiniTrack><svg width="9" height="6"><path d="M.5 0v6M2.500 0v6M4.500 0v6M6.500 0v6M8.500 0v6" stroke="#222" /></svg></MiniTrack>
            <button type="button" aria-label="向右"><Tri dir="r" w={4} h={8} /></button>
          </MiniScroll>
        </BoardBar>
        <Divider />
        <Lower><OrdersPanel /><TradePanel /></Lower>
        <StatusBar>
          <StatusCell $w={322}>
            <svg width="16" height="22"><circle cx="8" cy="6" r="3.500" fill="#eee" /><path d="M3 17c-1-5 2-8 5-8s6 3 5 8q-5 4-10 0z" fill="#ddd" /></svg>
            <Client>客户: 6666000251 结算日:2023-07-25</Client>
          </StatusCell>
          <StatusCell $w={420}>10:00:26 订货查询数据共有 0 条!</StatusCell>
          <StatusCell><Hours>{'交易时间:09:30:00-11:30:00    13:3'}</Hours></StatusCell>
          <StatusCell $w={194} $c="#f00" $center>10:02:03 开市</StatusCell>
          <StatusCell $w={127}>
            <svg width="16" height="13"><path d="M.5.5h15v11H.5z" fill="#e8f1ff" stroke="#6f9fe0" /><path d="M1 1l7 6 7-6M1 11l5-5M15 11l-5-5" fill="none" stroke="#6f9fe0" /></svg>
            <LinkState>交易<NetIcon /></LinkState><LinkState>行情<NetIcon on /></LinkState>
          </StatusCell>
        </StatusBar>
      </Window>
    </>
  );
}
